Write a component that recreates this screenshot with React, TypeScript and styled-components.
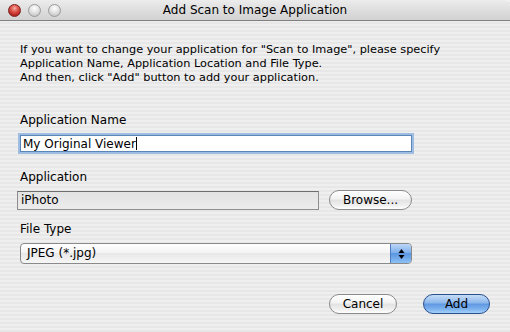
import React from 'react';
import styled, { createGlobalStyle, css } from 'styled-components';

const GlobalStyle = createGlobalStyle`
  html, body {
    margin: 0;
    padding: 0;
    width: 510px;
    height: 332px;
    overflow: hidden;
  }
  body {
    font-family: "DejaVu Sans", "Liberation Sans", sans-serif;
    color: #000;
  }
`;

const pinstripe = css`
  background: repeating-linear-gradient(
    to bottom,
    #efefef 0px,
    #efefef 2px,
    #e7e7e7 2px,
    #e7e7e7 4px
  );
`;

const Window = styled.div`
  width: 510px;
  height: 332px;
  display: flex;
  flex-direction: column;
  ${pinstripe};
`;

const TitleBar = styled.div`
  height: 20px;
  flex: none;
  display: flex;
  align-items: center;
  position: relative;
  background: linear-gradient(to bottom, #ececec 0%, #dedede 50%, #d2d2d2 100%);
  border-bottom: 1px solid #7f7f7f;
  border-top-right-radius: 8px;
`;

const Lights = styled.div`
  display: flex;
  gap: 7px;
  padding-left: 8px;
`;

const Light = styled.span<{ tone: 'red' | 'gray' }>`
  width: 13px;
  height: 13px;
  border-radius: 50%;
  box-sizing: border-box;
  ${({ tone }) =>
    tone === 'red'
      ? css`
          border: 1px solid #7a1f1f;
          background: radial-gradient(circle at 50% 30%, #f4b0a8 0%, #e05a50 35%, #b3231e 75%, #d6544c 100%);
        `
      : css`
          border: 1px solid #9a9a9a;
          background: radial-gradient(circle at 50% 30%, #ffffff 0%, #e6e6e6 40%, #c8c8c8 80%, #e4e4e4 100%);
        `}
`;

const Title = styled.div`
  position: absolute;
  left: 0;
  right: 0;
  top: 0;
  height: 20px;
  line-height: 20px;
  text-align: center;
  font-size: 12px;
  pointer-events: none;
`;

const Body = styled.div`
  display: flex;
  flex-direction: column;
  padding: 22px 20px 0 20px;
`;

const Intro = styled.p`
  margin: 0;
  font-size: 11.3px;
  line-height: 14px;
`;

const Label = styled.div<{ top: number }>`
  margin-top: ${({ top }) => top}px;
  font-size: 12px;
  line-height: 14px;
`;

const NameField = styled.div`
  margin-top: 8px;
  width: 392px;
  height: 17px;
  box-sizing: border-box;
  background: #fff;
  border: 1px solid #5d86b8;
  box-shadow: 0 0 0 2px #9dbde2;
  display: flex;
  align-items: center;
  padding-left: 2px;
  font-size: 12px;
`;

const Caret = styled.span`
  display: inline-block;
  width: 1px;
  height: 13px;
  background: #000;
`;

const Row = styled.div<{ top: number }>`
  margin-top: ${({ top }) => top}px;
  display: flex;
  align-items: center;
`;

const PathField = styled.div`
  margin-left: -3px;
  width: 302px;
  height: 19px;
  box-sizing: border-box;
  border: 1px solid #8e8e8e;
  border-top-color: #6e6e6e;
  background: linear-gradient(to bottom, #e2e2e2, #ececec);
  font-size: 12px;
  line-height: 17px;
  padding-left: 3px;
`;

const PillButton = styled.div<{ primary?: boolean; width: number; gapLeft?: number }>`
  width: ${({ width }) => width}px;
  margin-left: ${({ gapLeft = 0 }) => gapLeft}px;
  height: 20px;
  box-sizing: border-box;
  border-radius: 10px;
  display: flex;
  align-items: center;
  justify-content: center;
  font-size: 12px;
  ${({ primary }) =>
    primary
      ? css`
          border: 1px solid #2a4f8e;
          background: linear-gradient(
            to bottom,
            #c6dcf6 0%,
            #8ab6ec 45%,
            #5f98e2 50%,
            #7fb4f0 80%,
            #a6d0f8 100%
          );
        `
      : css`
          border: 1px solid #8a8a8a;
          background: linear-gradient(
            to bottom,
            #ffffff 0%,
            #f2f2f2 45%,
            #e2e2e2 50%,
            #f0f0f0 80%,
            #ffffff 100%
          );
        `}
`;

const Popup = styled.div`
  margin-top: 7px;
  width: 392px;
  height: 21px;
  box-sizing: border-box;
  border: 1px solid #8a8a8a;
  border-radius: 4px;
  display: flex;
  overflow: hidden;
  background: linear-gradient(to bottom, #ffffff 0%, #f4f4f4 45%, #e8e8e8 50%, #f6f6f6 100%);
`;

const PopupText = styled.div`
  flex: 1;
  font-size: 12px;
  line-height: 19px;
  padding-left: 6px;
`;

const PopupArrows = styled.div`
  width: 20px;
  border-left: 1px solid #4f7cc0;
  background: linear-gradient(to bottom, #bcd6f6 0%, #7fb0ec 45%, #5a96e2 50%, #8cc0f4 100%);
  display: flex;
  align-items: center;
  justify-content: center;
`;

const Footer = styled.div`
  margin-top: 30px;
  display: flex;
  justify-content: flex-end;
  gap: 26px;
  width: 470px;
`;

export default function App() {
  return (
    <>
      <GlobalStyle />
      <Window>
        <TitleBar>
          <Lights>
            <Light tone="red" />
            <Light tone="gray" />
            <Light tone="gray" />
          </Lights>
          <Title>Add Scan to Image Application</Title>
        </TitleBar>
        <Body>
          <Intro>
            If you want to change your application for "Scan to Image", please specify
            <br />
            Application Name, Application Location and File Type.
            <br />
            And then, click "Add" button to add your application.
          </Intro>
          <Label top={28}>Application Name</Label>
          <NameField>
            My Original Viewer
            <Caret />
          </NameField>
          <Label top={18}>Application</Label>
          <Row top={6}>
            <PathField>iPhoto</PathField>
            <PillButton width={83} gapLeft={10}>
              Browse...
            </PillButton>
          </Row>
          <Label top={12}>File Type</Label>
          <Popup>
            <PopupText>JPEG (*.jpg)</PopupText>
            <PopupArrows>
              <svg width="7" height="12" viewBox="0 0 7 12">
                <path d="M3.5 1 L6.5 5 L0.5 5 Z" fill="#000" />
                <path d="M3.5 11 L6.5 7 L0.5 7 Z" fill="#000" />
              </svg>
            </PopupArrows>
          </Popup>
          <Footer>
            <PillButton width={68}>Cancel</PillButton>
            <PillButton width={67} primary>
              Add
            </PillButton>
          </Footer>
        </Body>
      </Window>
    </>
  );
}
